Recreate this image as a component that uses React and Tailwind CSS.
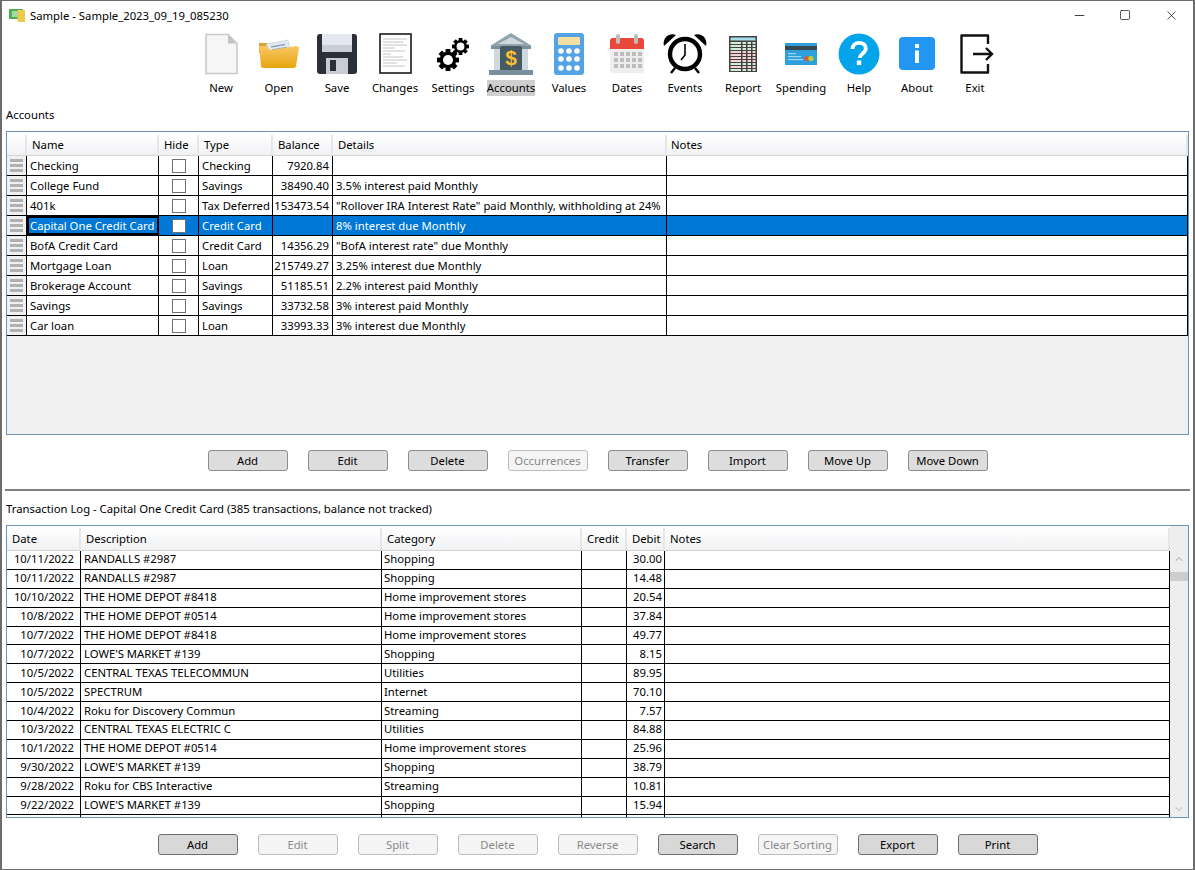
import { Minus, Square, X, ChevronUp, ChevronDown } from 'lucide-react';

const font = 'font-["Noto_Sans","Open_Sans",sans-serif]';

const accounts = [
  ['Checking', 'Checking', '7920.84', ''],
  ['College Fund', 'Savings', '38490.40', '3.5% interest paid Monthly'],
  ['401k', 'Tax Deferred', '153473.54', '"Rollover IRA Interest Rate" paid Monthly, withholding at 24%'],
  ['Capital One Credit Card', 'Credit Card', '', '8% interest due Monthly'],
  ['BofA Credit Card', 'Credit Card', '14356.29', '"BofA interest rate" due Monthly'],
  ['Mortgage Loan', 'Loan', '215749.27', '3.25% interest due Monthly'],
  ['Brokerage Account', 'Savings', '51185.51', '2.2% interest paid Monthly'],
  ['Savings', 'Savings', '33732.58', '3% interest paid Monthly'],
  ['Car loan', 'Loan', '33993.33', '3% interest due Monthly'],
];

const transactions = [
  ['10/11/2022', 'RANDALLS #2987', 'Shopping', '30.00'],
  ['10/11/2022', 'RANDALLS #2987', 'Shopping', '14.48'],
  ['10/10/2022', 'THE HOME DEPOT #8418', 'Home improvement stores', '20.54'],
  ['10/8/2022', 'THE HOME DEPOT #0514', 'Home improvement stores', '37.84'],
  ['10/7/2022', 'THE HOME DEPOT #8418', 'Home improvement stores', '49.77'],
  ['10/7/2022', "LOWE'S MARKET #139", 'Shopping', '8.15'],
  ['10/5/2022', 'CENTRAL TEXAS TELECOMMUN', 'Utilities', '89.95'],
  ['10/5/2022', 'SPECTRUM', 'Internet', '70.10'],
  ['10/4/2022', 'Roku for Discovery Commun', 'Streaming', '7.57'],
  ['10/3/2022', 'CENTRAL TEXAS ELECTRIC C', 'Utilities', '84.88'],
  ['10/1/2022', 'THE HOME DEPOT #0514', 'Home improvement stores', '25.96'],
  ['9/30/2022', "LOWE'S MARKET #139", 'Shopping', '38.79'],
  ['9/28/2022', 'Roku for CBS Interactive', 'Streaming', '10.81'],
  ['9/22/2022', "LOWE'S MARKET #139", 'Shopping', '15.94'],
];

const NewIcon = () => (
  <svg viewBox="0 0 42 42" className="w-[42px] h-[42px]">
    <path d="M6 1.5h22l9 9v30H6z" fill="#f6f6f6" stroke="#c9c9c9" strokeWidth="1.6" />
    <path d="M28 1.5v9h9z" fill="#c4c4c4" />
  </svg>
);

const OpenIcon = () => (
  <svg viewBox="0 0 42 42" className="w-[42px] h-[42px]">
    <defs>
      <linearGradient id="folder" x1="0" y1="0" x2="0" y2="1">
        <stop offset="0" stopColor="#f9c766" />
        <stop offset="1" stopColor="#e6a50c" />
      </linearGradient>
    </defs>
    <path d="M1 10h8l2 2h18v8H1z" fill="#d9a036" />
    <path d="M8 11l22-4 3 13H11z" fill="#e3e9ee" stroke="#b6c2cc" strokeWidth=".5" />
    <path d="M13 14l14-2.5M14 17l15-2.5" stroke="#8fa6b8" strokeWidth="1.4" />
    <path d="M1 13h8l3 4 7-1 19-3c2 0 3 1 3 2l-3 18c0 1-1 2-3 2H6c-2 0-3-1-3-2z" fill="url(#folder)" />
  </svg>
);

const SaveIcon = () => (
  <svg viewBox="0 0 42 42" className="w-[42px] h-[42px]">
    <rect x="1" y="1" width="40" height="40" rx="3" fill="#2b2f3a" />
    <rect x="6" y="1" width="30" height="18" fill="#e4e8ee" />
    <rect x="6" y="12" width="30" height="7" fill="#c9ced6" />
    <rect x="10" y="25" width="22" height="16" fill="#c9ccd2" />
    <rect x="14" y="27" width="6" height="11" fill="#2b2f3a" />
  </svg>
);

const ChangesIcon = () => (
  <svg viewBox="0 0 34 42" className="w-[34px] h-[42px]">
    <rect x="2" y="1" width="31" height="39" fill="#fff" stroke="#1a1a1a" strokeWidth="1.6" />
    <path d="M5 6h24M5 9h20M5 12h24M5 15h12M5 18h22M5 21h8M5 24h20M5 27h24M5 30h14M5 33h22" stroke="#c4c4c4" strokeWidth="1" />
  </svg>
);

const Gear = ({ cx, cy, r }) => (
  <g>
    {[0, 45, 90, 135].map((a) => (
      <rect key={a} x={cx - r * 0.22} y={cy - r} width={r * 0.44} height={r * 2} fill="#000" transform={`rotate(${a} ${cx} ${cy})`} />
    ))}
    <circle cx={cx} cy={cy} r={r * 0.76} fill="#000" />
    <circle cx={cx} cy={cy} r={r * 0.46} fill="#fff" />
  </g>
);

const SettingsIcon = () => (
  <svg viewBox="0 0 32 33" className="w-[32px] h-[33px]">
    <Gear cx={11} cy={22} r={11} />
    <Gear cx={23.5} cy={8.5} r={8.5} />
  </svg>
);

const AccountsIcon = () => (
  <svg viewBox="0 0 46 44" className="w-[46px] h-[44px]">
    <path d="M23 1L2 14h42z" fill="#90a4ae" />
    <path d="M23 5L10 12h26z" fill="#cfd8dc" />
    <rect x="3" y="14" width="40" height="3" fill="#78909c" />
    <rect x="6" y="17" width="8" height="21" fill="#cfd8dc" />
    <rect x="32" y="17" width="8" height="21" fill="#cfd8dc" />
    <rect x="12" y="14" width="22" height="25" rx="2" fill="#455a64" />
    <rect x="1" y="38" width="44" height="5" fill="#78909c" />
    <text x="23" y="33" textAnchor="middle" fontSize="21" fontWeight="700" fill="#fbc02d" fontFamily="Liberation Sans">$</text>
  </svg>
);

const ValuesIcon = () => (
  <svg viewBox="0 0 30 42" className="w-[30px] h-[42px]">
    <rect x="0" y="0" width="30" height="42" rx="3" fill="#54a4e5" />
    <rect x="4" y="4" width="22" height="8" rx="1" fill="#f3dfa2" />
    {[18, 26, 35].map((y) => [7, 15, 23].map((x) => <circle key={`${x}${y}`} cx={x} cy={y} r="2.8" fill="#fff" />))}
  </svg>
);

const DatesIcon = () => (
  <svg viewBox="0 0 34 40" className="w-[34px] h-[40px]">
    <rect x="0" y="4" width="34" height="35" rx="3" fill="#eeeeee" />
    <path d="M3 4h28a3 3 0 0 1 3 3v8H0V7a3 3 0 0 1 3-3z" fill="#e8473a" />
    <rect x="6" y="0" width="4" height="10" rx="2" fill="#bdbdbd" />
    <rect x="24" y="0" width="4" height="10" rx="2" fill="#bdbdbd" />
    {[18, 24, 30].map((y) => [4, 10, 16, 22, 28].map((x) => <rect key={`${x}${y}`} x={x} y={y} width="4" height="4" fill="#bdbdbd" />))}
  </svg>
);

const EventsIcon = () => (
  <svg viewBox="0 0 44 42" className="w-[44px] h-[42px]">
    <path d="M1 13C-1 5 6 -1 13 2z" fill="#000" />
    <path d="M43 13C45 5 38 -1 31 2z" fill="#000" />
    <circle cx="22" cy="21" r="15" fill="#fff" stroke="#000" strokeWidth="4.4" />
    <path d="M22 11v11l-4 5" fill="none" stroke="#000" strokeWidth="1.6" />
    <path d="M12 35l-4 5M32 35l4 5" stroke="#000" strokeWidth="2.4" />
  </svg>
);

const ReportIcon = () => (
  <svg viewBox="0 0 28 36" className="w-[28px] h-[36px]">
    <rect x="0" y="0" width="28" height="36" fill="#424242" />
    <rect x="1.5" y="1.5" width="25" height="3" fill="#a8dfee" />
    {[6, 9, 12].map((y) => <rect key={y} x="1.5" y={y} width="25" height="2" fill="#d5ecd7" />)}
    {[15, 18, 21].map((y) => <rect key={y} x="1.5" y={y} width="25" height="2" fill="#f4d3d1" />)}
    {[24, 27, 30, 33].map((y) => <rect key={y} x="1.5" y={y} width="25" height="2" fill={y % 2 ? '#d5ecd7' : '#f4d3d1'} />)}
    {[12, 17, 22].map((x) => <rect key={x} x={x} y="5" width="1.5" height="31" fill="#424242" />)}
  </svg>
);

const SpendingIcon = () => (
  <svg viewBox="0 0 32 22" className="w-[32px] h-[22px]">
    <rect x="0" y="0" width="32" height="22" fill="#2f9fdc" />
    <rect x="0" y="3" width="32" height="4" fill="#37474f" />
    <rect x="3" y="10" width="8" height="1.2" fill="#9fd3ee" />
    <rect x="3" y="13" width="13" height="1.2" fill="#9fd3ee" />
    <rect x="3" y="16" width="15" height="1.2" fill="#9fd3ee" />
    <circle cx="22" cy="15.5" r="2.6" fill="#e8553f" />
    <circle cx="26" cy="15.5" r="2.6" fill="#b5d334" />
  </svg>
);

const HelpIcon = () => (
  <svg viewBox="0 0 42 42" className="w-[42px] h-[42px]">
    <circle cx="21" cy="21" r="20.5" fill="#03a4ea" />
    <path d="M14.5 16c0-4 3-6.2 6.7-6.2s6.6 2.2 6.6 5.6c0 5-6 5-6 9.5" fill="none" stroke="#fff" strokeWidth="3.8" />
    <rect x="18.8" y="27.5" width="4.4" height="4.6" fill="#fff" />
  </svg>
);

const AboutIcon = () => (
  <svg viewBox="0 0 36 34" className="w-[36px] h-[34px]">
    <rect x="0" y="0" width="36" height="33" rx="4" fill="#2196f3" />
    <rect x="16" y="7" width="4" height="4" fill="#fff" />
    <rect x="16" y="13.5" width="4" height="12.5" fill="#fff" />
  </svg>
);

const ExitIcon = () => (
  <svg viewBox="0 0 34 40" className="w-[34px] h-[40px] ml-[3px]">
    <path d="M28 10V1.5H1.5v37H28V30" fill="none" stroke="#111" strokeWidth="2.4" strokeLinejoin="round" />
    <path d="M13 20h19M26 14l6 6-6 6" fill="none" stroke="#111" strokeWidth="2.4" />
  </svg>
);

const tools = [
  ['New', NewIcon], ['Open', OpenIcon], ['Save', SaveIcon], ['Changes', ChangesIcon],
  ['Settings', SettingsIcon], ['Accounts', AccountsIcon], ['Values', ValuesIcon], ['Dates', DatesIcon],
  ['Events', EventsIcon], ['Report', ReportIcon], ['Spending', SpendingIcon], ['Help', HelpIcon],
  ['About', AboutIcon], ['Exit', ExitIcon],
];

function Btn({ label, disabled, dark }) {
  return (
    <button
      className={`w-20 h-[21px] rounded-[3px] border leading-none ${
        disabled ? 'border-[#bdbdbd] bg-[#f4f4f4] text-[#8a8a8a]' : dark ? 'border-[#6e6e6e] bg-[#d8d8d8] text-black' : 'border-[#8c8c8c] bg-[#dddddd] text-black'
      }`}
    >
      {label}
    </button>
  );
}

const Head = ({ children }) => (
  <div className="pl-[5px] flex items-center border-r-2 border-[#e6e6e8] border-b border-b-[#d5d5d5] bg-gradient-to-b from-white to-[#f0f1f3] truncate">{children}</div>
);

const acctCols = 'grid grid-cols-[20px_132px_40px_74px_60px_334px_1fr]';
const txCols = 'grid grid-cols-[74px_301px_200px_45px_38px_1fr]';

function AccountRow({ row, selected }) {
  const [name, type, balance, details] = row;
  const cell = 'border-r border-black px-[3px] pt-[1px] flex items-center whitespace-nowrap overflow-hidden';
  return (
    <div className={`${acctCols} h-5 border-b border-black ${selected ? 'bg-[#0078d7] text-white' : ''}`}>
      <div className="bg-[#f0f0f0] border-r border-black flex flex-col justify-center gap-[2px] px-[3px]">
        <div className="h-[3px] bg-[#b0b0b0]" />
        <div className="h-[3px] bg-[#b0b0b0]" />
        <div className="h-[3px] bg-[#b0b0b0]" />
      </div>
      <div className={selected ? 'border-2 border-black flex items-center px-[1px] pt-[1px] whitespace-nowrap overflow-hidden' : cell}>{name}</div>
      <div className="border-r border-black flex items-center justify-center">
        <div className={`w-[14px] h-[14px] border border-[#707070] ${selected ? 'bg-white' : ''}`} />
      </div>
      <div className={cell}>{type}</div>
      <div className={`${cell} justify-end`}>{balance}</div>
      <div className={cell}>{details}</div>
      <div className="border-r border-black" />
    </div>
  );
}

function TxRow({ row }) {
  const [date, desc, cat, debit] = row;
  const cell = 'border-r border-black px-[2px] flex items-center whitespace-nowrap overflow-hidden';
  return (
    <div className={`${txCols} h-[18.9px] border-b border-black`}>
      <div className="border-r border-black pr-[6px] flex items-center justify-end whitespace-nowrap">{date}</div>
      <div className="border-r border-black px-[3px] flex items-center whitespace-nowrap overflow-hidden">{desc}</div>
      <div className={cell}>{cat}</div>
      <div className={cell} />
      <div className={`${cell} justify-end`}>{debit}</div>
      <div className="border-r border-black" />
    </div>
  );
}

export default function App() {
  return (
    <div className={`w-[1195px] h-[870px] bg-white border border-[#6d6d6d] border-x-2 flex flex-col overflow-hidden text-[11.3px] text-black ${font}`}>
      {/* title bar */}
      <div className="h-[30px] flex items-center pl-[7px] shrink-0">
        <svg viewBox="0 0 16 13" className="w-[16px] h-[13px] mr-[5px] -mt-[1px]">
          <rect x="0" y="0" width="14" height="10" fill="#4caf50" />
          <rect x="3" y="2" width="8" height="6" fill="#a5d6a7" />
          <rect x="8.5" y="1" width="7.5" height="12" rx="1" fill="#ecc94b" />
        </svg>
        <span>Sample - Sample_2023_09_19_085230</span>
        <div className="ml-auto flex items-center -mr-[1px] -mt-[2px]">
          <div className="w-[46px] flex justify-center"><Minus size={15} strokeWidth={1.2} /></div>
          <div className="w-[46px] flex justify-center"><Square size={12} strokeWidth={1.3} /></div>
          <div className="w-[46px] flex justify-center"><X size={15} strokeWidth={1.1} /></div>
        </div>
      </div>

      {/* toolbar */}
      <div className="h-[66px] shrink-0 flex pl-[190px]">
        {tools.map(([label, Icon]) => (
          <div key={label} className="w-[58px] flex flex-col items-center">
            <div className="h-[46px] flex items-center justify-center"><Icon /></div>
            <span className={`mt-[3px] h-4 leading-4 ${label === 'Accounts' ? 'bg-[#cfcfcf]' : ''}`}>{label}</span>
          </div>
        ))}
      </div>

      <div className="pl-[4px] mt-[10px] h-4 leading-4 shrink-0">Accounts</div>

      {/* accounts table */}
      <div className="ml-[4px] mr-[4px] mt-[8px] h-[304px] shrink-0 border border-[#6f93b8] bg-[#f0f0f0] overflow-hidden">
        <div className={`${acctCols} h-[24px] pt-[3px] bg-white`}>
          <Head />
          <Head>Name</Head>
          <Head>Hide</Head>
          <Head>Type</Head>
          <Head>Balance</Head>
          <Head>Details</Head>
          <Head><span className="-ml-[1px]">Notes</span></Head>
        </div>
        <div className="bg-white">
          {accounts.map((row, i) => <AccountRow key={row[0]} row={row} selected={i === 3} />)}
        </div>
      </div>

      <div className="mt-[15px] h-[21px] shrink-0 flex justify-center gap-5">
        {['Add', 'Edit', 'Delete', 'Occurrences', 'Transfer', 'Import', 'Move Up', 'Move Down'].map((b) => (
          <Btn key={b} label={b} disabled={b === 'Occurrences'} />
        ))}
      </div>

      <div className="mt-[18px] ml-[3px] mr-[3px] h-[2px] shrink-0 bg-[#808080]" />

      <div className="pl-[4px] mt-[10px] h-4 leading-4 shrink-0">Transaction Log - Capital One Credit Card (385 transactions, balance not tracked)</div>

      {/* transaction table */}
      <div className="ml-[4px] mr-[4px] mt-[8px] h-[293px] shrink-0 border border-[#6f93b8] flex overflow-hidden">
        <div className="flex-1 min-w-0">
          <div className={`${txCols} h-[25px] pt-[2px]`}>
            <Head>Date</Head>
            <Head>Description</Head>
            <Head>Category</Head>
            <Head>Credit</Head>
            <Head>Debit</Head>
            <Head>Notes</Head>
          </div>
          {transactions.map((row, i) => <TxRow key={i} row={row} />)}
          <div className={`${txCols} h-[19px]`}>
            <div className="border-r border-black" />
            <div className="border-r border-black" />
            <div className="border-r border-black" />
            <div className="border-r border-black" />
            <div className="border-r border-black" />
            <div className="border-r border-black" />
          </div>
        </div>
        <div className="w-[18px] bg-[#eeeeee] flex flex-col items-center">
          <div className="h-[46px] pt-[27px] text-[#a0a0a0]"><ChevronUp size={12} strokeWidth={2} /></div>
          <div className="w-full h-[9px] bg-[#cdcdcd]" />
          <div className="flex-1" />
          <div className="h-[14px] text-[#a0a0a0]"><ChevronDown size={12} strokeWidth={1.5} /></div>
        </div>
      </div>

      <div className="mt-[16px] h-[21px] shrink-0 flex justify-center gap-5">
        <Btn label="Add" dark />
        <Btn label="Edit" disabled />
        <Btn label="Split" disabled />
        <Btn label="Delete" disabled />
        <Btn label="Reverse" disabled />
        <Btn label="Search" dark />
        <Btn label="Clear Sorting" disabled />
        <Btn label="Export" dark />
        <Btn label="Print" dark />
      </div>
    </div>
  );
}
